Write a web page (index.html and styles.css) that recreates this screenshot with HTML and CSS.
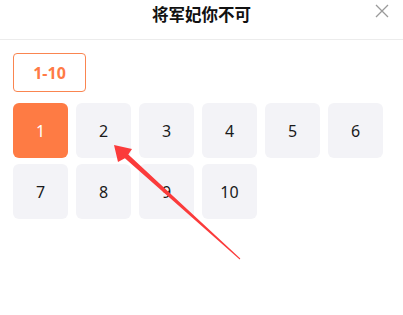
FILE: index.html
```html
<!DOCTYPE html>
<html>
  <head>
    <title>将军妃你不可</title>
    <link rel="stylesheet" href="styles.css">
  </head>
  <body>
    <div class="panel">
      <div class="panel-header">
        <h1>将军妃你不可</h1>
        <span class="close">
          <svg width="14" height="14" viewBox="0 0 14 14">
            <path d="M1 1L13 13M13 1L1 13" stroke="#9a9a9a" stroke-width="1.3" fill="none" />
          </svg>
        </span>
      </div>
      <div class="panel-body">
        <div class="tabs">
          <button class="tab active" type="button">1-10</button>
        </div>
        <ul class="episode-list">
          <li class="episode current">1</li>
          <li class="episode">2</li>
          <li class="episode">3</li>
          <li class="episode">4</li>
          <li class="episode">5</li>
          <li class="episode">6</li>
          <li class="episode">7</li>
          <li class="episode">8</li>
          <li class="episode">9</li>
          <li class="episode">10</li>
        </ul>
      </div>
      <!-- annotation arrow drawn over the list -->
      <svg class="arrow" width="403" height="315" viewBox="0 0 403 315">
        <polygon fill="#fb3b3b" points="114,145 132,149 128.3,154.5 240.3,258.6 239.7,259.4 124.9,158.3 118,162" />
      </svg>
    </div>
  </body>
</html>
```

FILE: styles.css
```css
body {
  margin: 0;
  font-family: "Noto Sans CJK SC", "Noto Sans", sans-serif;
  background: #fff;
  color: #222;
}

.panel {
  position: relative;
  width: 403px;
  height: 315px;
  overflow: hidden;
}

.panel-header {
  position: relative;
  height: 39px;
  border-bottom: 1px solid #ececec;
  display: flex;
  align-items: center;
  justify-content: center;
}

.panel-header h1 {
  margin: 0;
  font-size: 16.5px;
  font-weight: 700;
  color: #111;
  line-height: 1;
  margin-top: -11px;
}

.close {
  position: absolute;
  right: 14px;
  top: 4px;
  width: 14px;
  height: 14px;
  cursor: pointer;
}

.close svg {
  display: block;
}

.panel-body {
  padding: 13px 13px 0;
}

.tabs {
  display: flex;
  margin-bottom: 11px;
}

.tab {
  width: 73px;
  height: 39px;
  border: 1px solid #fa8550;
  border-radius: 4px;
  background: #fff;
  color: #ff7a45;
  font-family: "Noto Sans", "Noto Sans CJK SC", sans-serif;
  font-size: 16px;
  font-weight: 700;
  padding: 0;
}

.episode-list {
  list-style: none;
  margin: 0;
  padding: 0;
  display: grid;
  grid-template-columns: repeat(6, 55px);
  grid-auto-rows: 55px;
  column-gap: 8px;
  row-gap: 6px;
}

.episode {
  background: #f3f3f7;
  border-radius: 6px;
  display: flex;
  align-items: center;
  justify-content: center;
  font-family: "Noto Sans", sans-serif;
  font-size: 16px;
  color: #1a1a1a;
}

.episode.current {
  background: #fe7b44;
  color: #fff;
}

.arrow {
  position: absolute;
  left: 0;
  top: 0;
  pointer-events: none;
}
```
